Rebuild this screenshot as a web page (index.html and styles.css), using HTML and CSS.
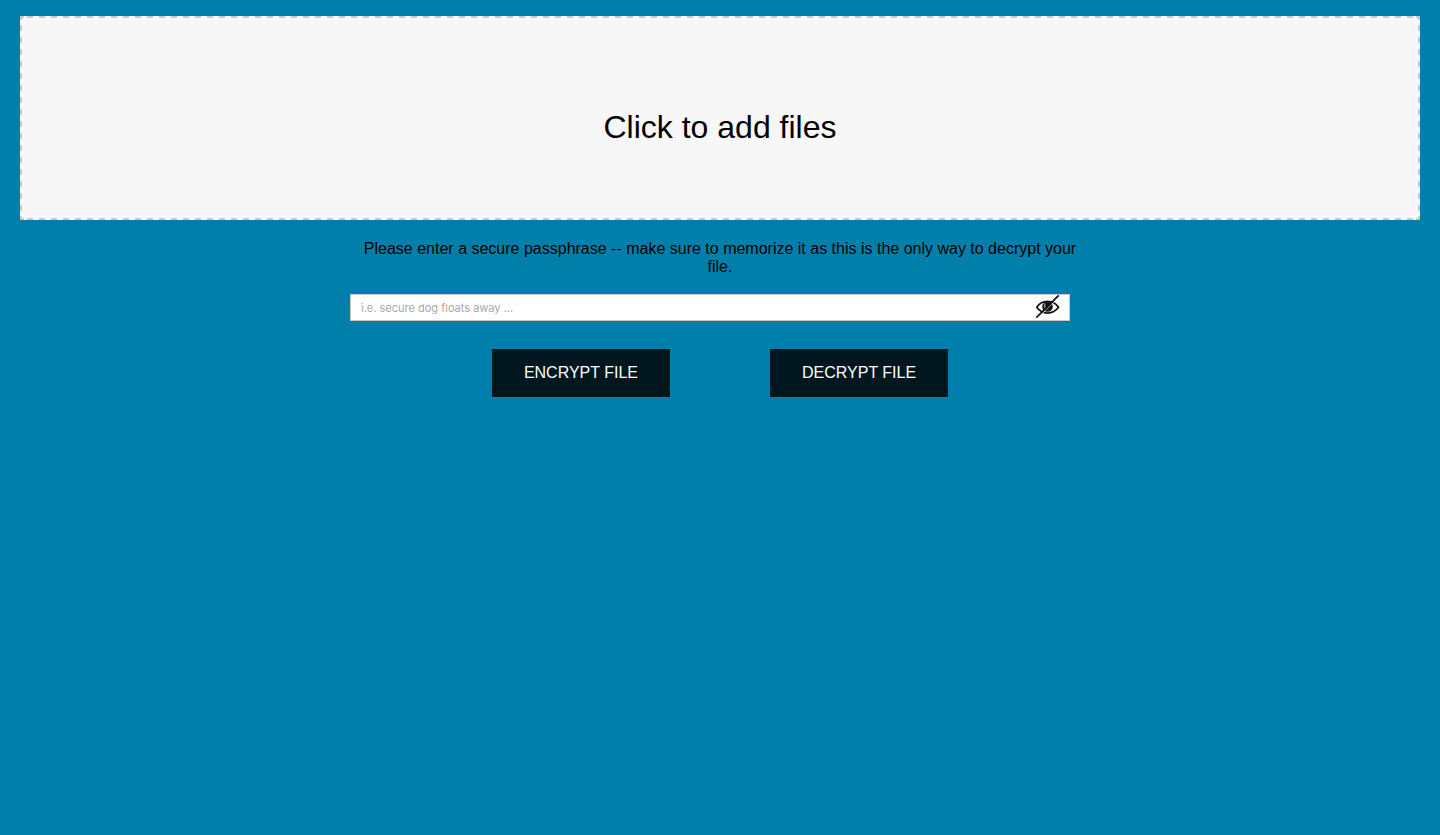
FILE: index.html
```html
<!DOCTYPE html>
<html lang="en">
<head>
<meta charset="utf-8">
<meta name="viewport" content="width=device-width, initial-scale=1">
<title>File encryption</title>
<link rel="stylesheet" href="styles.css">
</head>
<body>
<main class="page">
  <label class="dropzone">
    <span>Click to add files</span>
    <input class="file-input" type="file" multiple>
  </label>
  <form class="form">
    <label class="hint" for="passphrase">Please enter a secure passphrase -- make sure to memorize it as this is the only way to decrypt your file.</label>
    <div class="field">
      <input class="passphrase" id="passphrase" type="password" placeholder="i.e. secure dog floats away ...">
      <button class="toggle" type="button" aria-label="Show passphrase">
        <svg width="24" height="24" viewBox="0 0 24 24" fill="none" stroke="#111">
          <path d="M.8 12.300C6 4.500 17 4.500 22.500 12.300C17 20 6 20 .8 12.300Z" stroke-width="1.700"/>
          <circle cx="11.500" cy="11.500" r="5.300" fill="#111" stroke="none"/>
          <path d="M8.800 8.500v5" stroke="#aaa" stroke-width="1.200"/>
          <path d="M1.500 23.500L23.500 1.500" stroke="#fff" stroke-opacity=".7" stroke-width=".8"/>
          <path d="M.3 22.700L22.700.3" stroke-width="1.700"/>
        </svg>
      </button>
    </div>
    <div class="actions">
      <button class="action" type="button">ENCRYPT FILE</button>
      <button class="action" type="button">DECRYPT FILE</button>
    </div>
  </form>
</main>
</body>
</html>
```
FILE: styles.css
```css
* {
  box-sizing: border-box;
}

body {
  margin: 0;
  background: #007fab;
  color: #000;
  font: 16px/18px "Liberation Sans", Arial, sans-serif;
}

.page {
  padding: 16px 20px;
}

/* The dashed outline is drawn with four strips, 6px on and 6px off. */
.dropzone {
  --dash-x: linear-gradient(to right, #c8c8c8 0 1px, transparent 1px 7px, #c8c8c8 7px 12px);
  --dash-y: linear-gradient(to bottom, #c8c8c8 0 3px, transparent 3px 9px, #c8c8c8 9px 12px);
  --corner: linear-gradient(#c8c8c8, #c8c8c8);
  display: flex;
  align-items: center;
  justify-content: center;
  min-height: 204px;
  padding-top: 18px;
  background:
    var(--corner) top left / 4px 2px no-repeat,
    var(--corner) top left / 2px 4px no-repeat,
    var(--corner) top right / 4px 2px no-repeat,
    var(--corner) top right / 2px 4px no-repeat,
    var(--corner) bottom left / 4px 2px no-repeat,
    var(--corner) bottom left / 2px 4px no-repeat,
    var(--corner) bottom right / 4px 2px no-repeat,
    var(--corner) bottom right / 2px 4px no-repeat,
    var(--dash-x) top left / 12px 2px repeat-x,
    var(--dash-x) bottom left / 12px 2px repeat-x,
    var(--dash-y) top left / 2px 12px repeat-y,
    var(--dash-y) top right / 2px 12px repeat-y,
    #f7f7f7;
  font-size: 32px;
  line-height: 36px;
  cursor: pointer;
}

.file-input {
  position: absolute;
  width: 1px;
  height: 1px;
  opacity: 0;
}

.form {
  max-width: 740px;
  margin: 20px auto 0;
}

.hint {
  display: block;
  padding: 0 10px;
  text-align: center;
}

.field {
  position: relative;
  margin: 18px 20px 0 0;
}

.passphrase {
  display: block;
  width: 100%;
  height: 27px;
  padding: 0 40px 0 10px;
  border: 1px solid #c8c8c8;
  border-radius: 0;
  background: #fff;
  font: 11px Inter, sans-serif;
}

.passphrase::placeholder {
  color: #a9a9a9;
}

.toggle {
  position: absolute;
  top: 1px;
  right: 10px;
  padding: 0;
  border: 0;
  background: none;
  cursor: pointer;
}

.toggle svg {
  display: block;
}

.actions {
  display: flex;
  flex-wrap: wrap;
  justify-content: center;
  gap: 16px 100px;
  margin-top: 28px;
}

.action {
  height: 48px;
  padding: 0 32px;
  border: 0;
  background: #00171f;
  color: #fff;
  font: 16px/18px "Liberation Sans", Arial, sans-serif;
  cursor: pointer;
}
```
